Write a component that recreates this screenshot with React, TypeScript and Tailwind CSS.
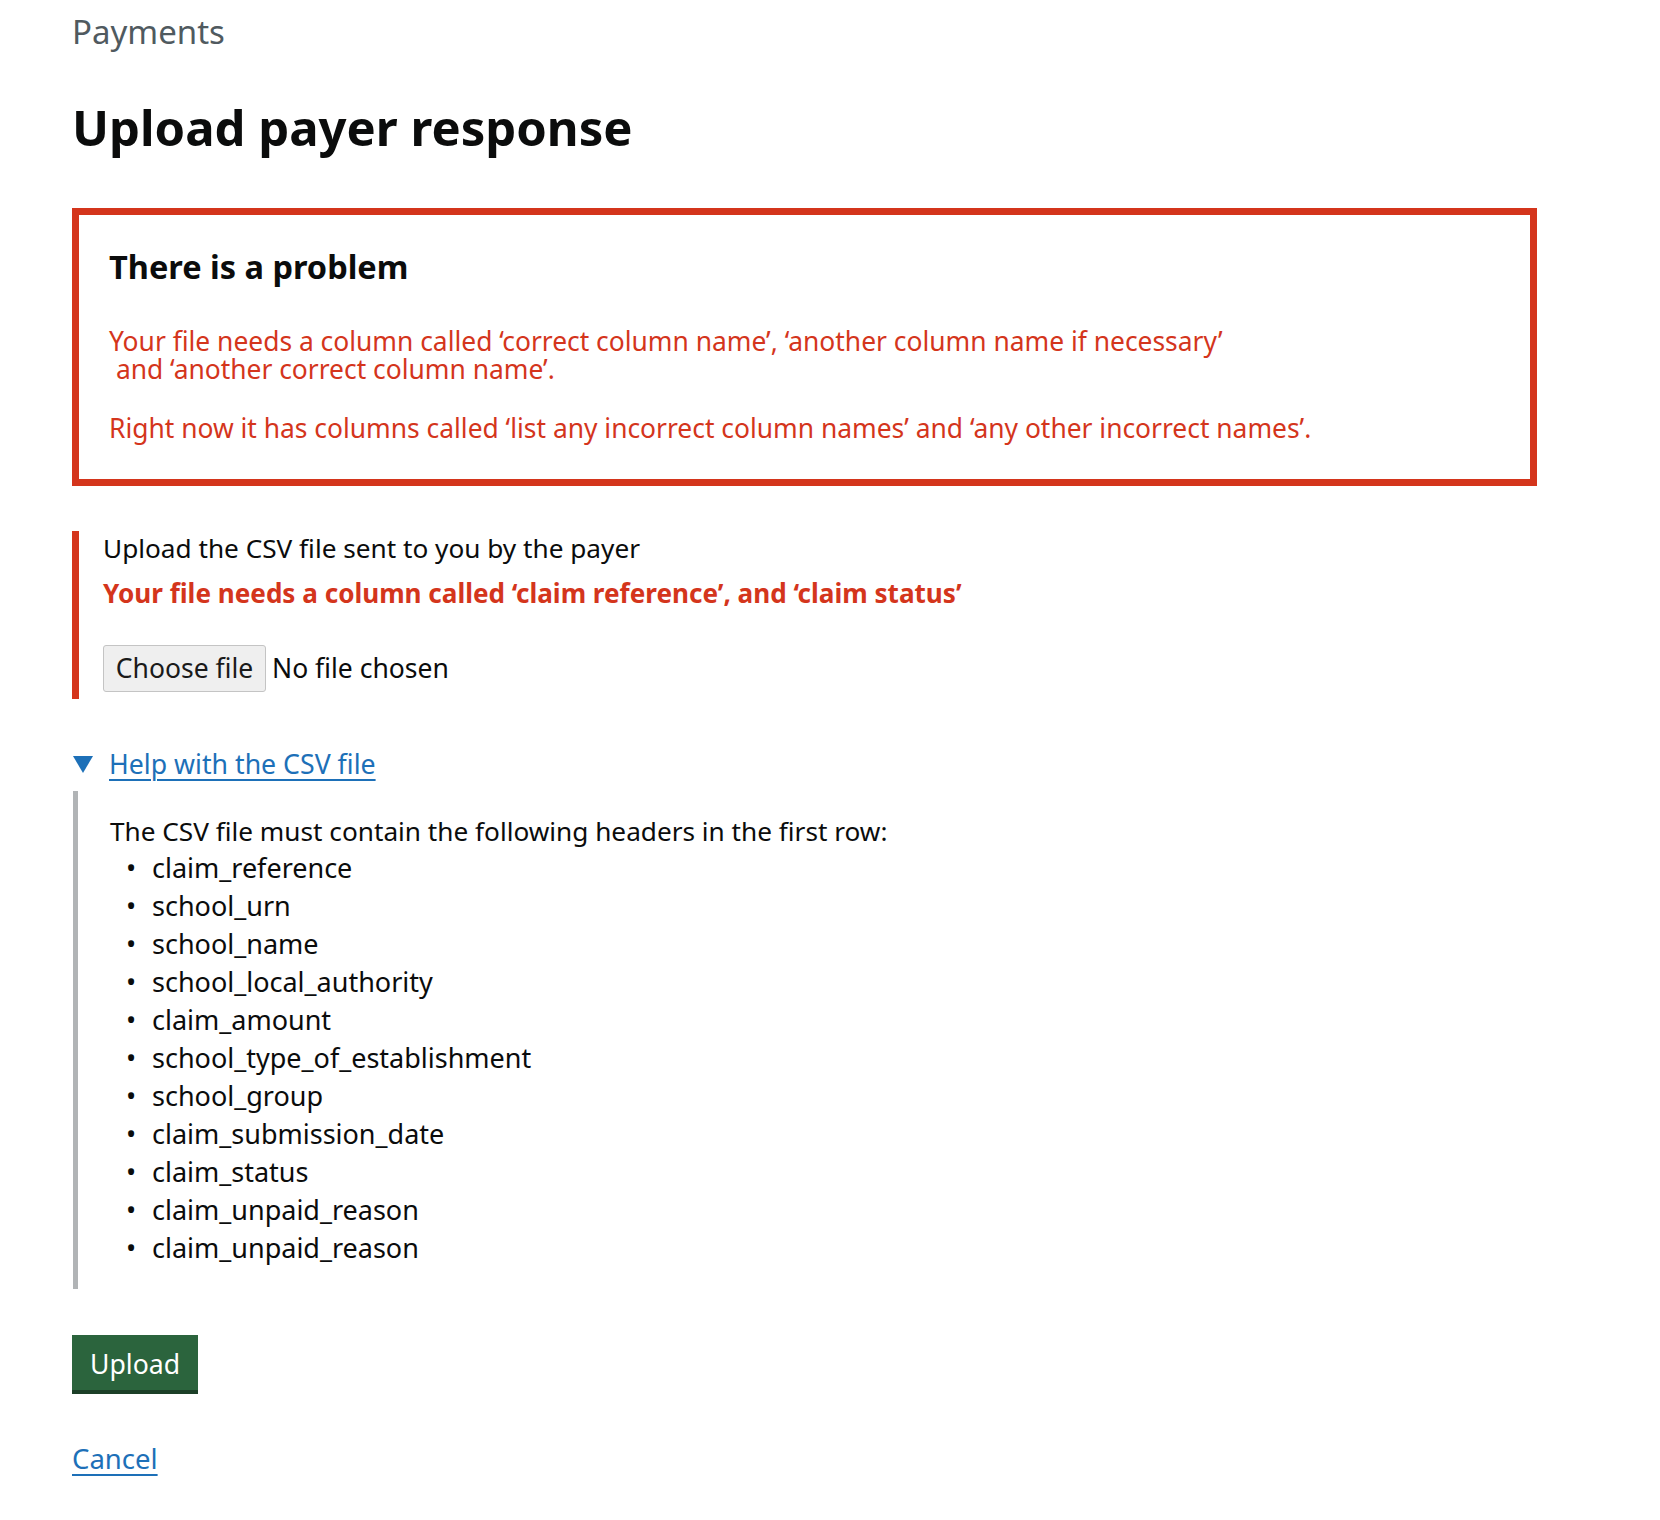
import React from "react";

const headers = [
  "claim_reference",
  "school_urn",
  "school_name",
  "school_local_authority",
  "claim_amount",
  "school_type_of_establishment",
  "school_group",
  "claim_submission_date",
  "claim_status",
  "claim_unpaid_reason",
  "claim_unpaid_reason",
];

export default function App() {
  return (
    <div
      className="min-h-[1520px] w-[1660px] bg-white pl-[72px] pt-[12px] text-[#0b0c0c]"
      style={{ fontFamily: '"Noto Sans", "Liberation Sans", sans-serif' }}
    >
      <div className="text-[33px] leading-[40px] text-[#505a5f]">Payments</div>

      <h1 className="mt-[47px] text-[49px] font-bold leading-[56px]">Upload payer response</h1>

      <div className="mt-[53px] w-[1465px] border-[7px] border-[#d4351c] pb-[37px] pl-[30px] pt-[32px]">
        <h2 className="text-[32.5px] font-bold leading-[40px]">There is a problem</h2>
        <p className="mt-[40px] text-[26.4px] leading-[28px] text-[#d4351c]">
          Your file needs a column called ‘correct column name’, ‘another column name if necessary’
          <br />
          {"\u00a0"}and ‘another correct column name’.
        </p>
        <p className="mt-[31px] text-[26.4px] leading-[28px] text-[#d4351c]">
          Right now it has columns called ‘list any incorrect column names’ and ‘any other incorrect names’.
        </p>
      </div>

      <div className="mt-[45px] border-l-[7px] border-[#d4351c] pb-[7px] pl-[24px] pt-[3px]">
        <label className="block text-[26.2px] leading-[28px]">Upload the CSV file sent to you by the payer</label>
        <p className="mt-[17px] text-[26.1px] font-bold leading-[28px] text-[#d4351c]">
          Your file needs a column called ‘claim reference’, and ‘claim status’
        </p>
        <div className="mt-[38px] flex items-center gap-[6px]">
          <button className="h-[47px] w-[163px] rounded-[3px] border border-[#c4c4c4] bg-[#efefef] text-[26.5px] text-[#1a1a1a]">
            Choose file
          </button>
          <span className="text-[26.5px] text-[#0b0c0c]">No file chosen</span>
        </div>
      </div>

      <div className="mt-[51px]">
        <div className="flex items-center">
          <svg width="20" height="17" viewBox="0 0 20 17" className="ml-[1px] mr-[16px]">
            <polygon points="0,0 20,0 10,17" fill="#1d70b8" />
          </svg>
          <a
            href="#"
            className="text-[26.7px] leading-[28px] text-[#1d70b8] underline decoration-[2px] underline-offset-[5px]"
          >
            Help with the CSV file
          </a>
        </div>
        <div className="ml-[1px] mt-[13px] border-l-[5px] border-[#b1b4b6] pb-[22px] pl-[32px] pt-[22px]">
          <p className="text-[26.2px] leading-[36px]">The CSV file must contain the following headers in the first row:</p>
          <ul>
            {headers.map((h, i) => (
              <li key={i} className="flex text-[27px] leading-[38px]">
                <span className="w-[42px] pl-[16px]">•</span>
                <span>{h}</span>
              </li>
            ))}
          </ul>
        </div>
      </div>

      <button className="mt-[46px] block h-[55px] w-[126px] bg-[#2b643d] pt-[2px] text-[26.6px] leading-[28px] text-white shadow-[0_4px_0_#1c3f27]">
        Upload
      </button>

      <div className="mt-[55px]">
        <a
          href="#"
          className="text-[27.5px] leading-[28px] text-[#1d70b8] underline decoration-[2px] underline-offset-[5px]"
        >
          Cancel
        </a>
      </div>
    </div>
  );
}
